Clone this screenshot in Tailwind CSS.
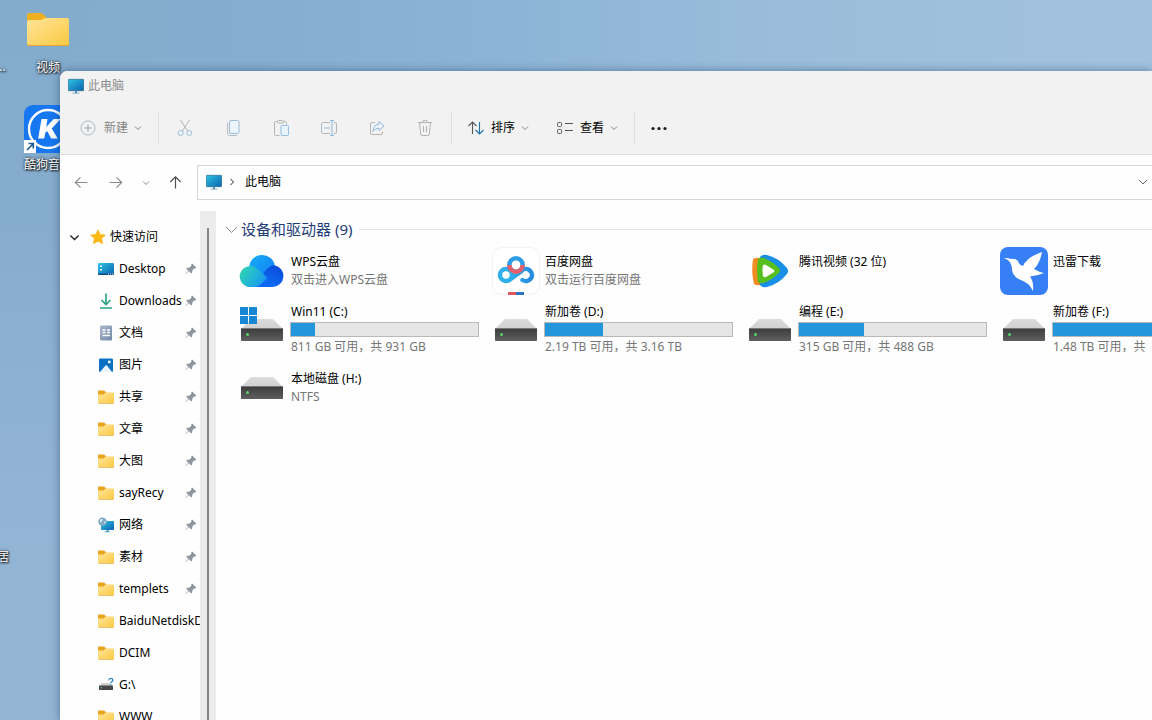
<!DOCTYPE html>
<html lang="zh-CN">
<head>
<meta charset="utf-8">
<meta name="viewport" content="width=device-width, initial-scale=1">
<title>此电脑</title>
<script src="https://cdn.jsdelivr.net/npm/@tailwindcss/browser@4"></script>
</head>
<body class="relative h-screen overflow-hidden bg-[#8fb3d3] bg-[linear-gradient(90deg,#82abcb00_6%,#84adcf_22%,#8db4d6_45%,#98bcda_65%,#9fc0dc_85%,#a2c1de_100%),linear-gradient(180deg,#82abcc_0%,#86accd_30%,#93b5d5_75%,#93b5d3_100%)] font-['Noto_Sans','Noto_Sans_CJK_SC',sans-serif] text-xs text-black">

<!-- Shared icons -->
<svg class="absolute h-0 w-0" aria-hidden="true">
  <defs>
    <linearGradient id="gFolder" x1="0" y1="0" x2="1" y2="1"><stop offset="0" stop-color="#ffe59a"/><stop offset="1" stop-color="#fbc842"/></linearGradient>
    <linearGradient id="gScreen" x1="0" y1="0" x2="1" y2="1"><stop offset="0" stop-color="#2fc3e4"/><stop offset="1" stop-color="#0b62b0"/></linearGradient>
    <linearGradient id="gDriveTop" x1="0" y1="0" x2="0" y2="1"><stop offset="0" stop-color="#dcdcdc"/><stop offset="1" stop-color="#d0d0d0"/></linearGradient>
    <linearGradient id="gDrive" x1="0" y1="0" x2="0" y2="1"><stop offset="0" stop-color="#3c3c3c"/><stop offset="1" stop-color="#5e5e5e"/></linearGradient>
    <linearGradient id="gCloudL" x1="0" y1="0.3" x2="1" y2="0.8"><stop offset="0" stop-color="#2fd3b4"/><stop offset="1" stop-color="#1594f5"/></linearGradient>
    <linearGradient id="gCloudT" x1="0" y1="0" x2="1" y2="1"><stop offset="0" stop-color="#16aef6"/><stop offset="1" stop-color="#1277f5"/></linearGradient>
    <linearGradient id="gCloudR" x1="0.8" y1="0" x2="0.3" y2="1"><stop offset="0" stop-color="#0a48d8"/><stop offset="1" stop-color="#1070f4"/></linearGradient>
    <linearGradient id="gBaidu" x1="0" y1="0" x2="1" y2="0"><stop offset="0" stop-color="#2fb0ea"/><stop offset="1" stop-color="#2a8be0"/></linearGradient>
    <linearGradient id="gDoc" x1="0" y1="0" x2="1" y2="1"><stop offset="0" stop-color="#a9b8cc"/><stop offset="1" stop-color="#7488a6"/></linearGradient>
  </defs>
  <symbol id="folder" viewBox="0 0 44 36">
    <path d="M1 3a2 2 0 0 1 2-2h11q2 0 3 1l4 4v8H1z" fill="#eeaf20"/>
    <path d="M1 10a2 2 0 0 1 2-2h11q2 0 3-1l2-1h22a2 2 0 0 1 2 2v24a2 2 0 0 1-2 2H3a2 2 0 0 1-2-2z" fill="url(#gFolder)"/>
    <path d="M1 31v1a2 2 0 0 0 2 2h38a2 2 0 0 0 2-2v-1a2 2 0 0 1-2 2H3a2 2 0 0 1-2-2z" fill="#e4a52d"/>
  </symbol>
  <symbol id="folder16" viewBox="0 0 16 14">
    <path d="M0 1.500a1 1 0 0 1 1-1h5l2.500 2V6H0z" fill="#e3a51c"/>
    <path d="M0 4.500h5.500L7.500 2.500H15a1 1 0 0 1 1 1V12.500a1 1 0 0 1-1 1H1a1 1 0 0 1-1-1z" fill="url(#gFolder)"/>
    <path d="M0 12.300v.2a1 1 0 0 0 1 1h14a1 1 0 0 0 1-1v-.2a1 1 0 0 1-1 .6H1a1 1 0 0 1-1-.6z" fill="#dca031"/>
  </symbol>
  <symbol id="monitor" viewBox="0 0 16 16">
    <rect x="0.3" y="1.3" width="15.4" height="11.4" rx="0.8" fill="url(#gScreen)" stroke="#1b5c80" stroke-width="0.6"/>
    <path d="M7 13h2v2H7zM4.500 14.700h7v.8h-7z" fill="#5b93b8"/>
  </symbol>
  <symbol id="chev" viewBox="0 0 8 8"><path d="M1 2.500 4 5.500 7 2.500" fill="none" stroke="currentColor"/></symbol>
  <symbol id="pin" viewBox="0 0 12 12"><path d="M7.200.5 11.500 4.800 10.200 5.600 9.300 5.500 7.300 7.500 7.200 9.800 6.200 10.400 3.900 8.100.7 11.300.5 10.900 3.200 7.400 1.300 5.500 1.900 4.700 4.300 4.700 6.300 2.700 6.200 1.600z" fill="#8e959e"/></symbol>
  <symbol id="drive" viewBox="0 0 48 48">
    <path d="M13 14h22l10 10H3z" fill="url(#gDriveTop)"/>
    <rect x="3" y="23" width="42" height="13" rx="0.8" fill="url(#gDrive)"/>
    <path d="M3 23.500h42" stroke="#777"/>
    <circle cx="9.500" cy="29.500" r="1.500" fill="#54d468"/>
  </symbol>
</svg>

<!-- Desktop shortcuts -->
<div class="absolute left-[18px] top-3 flex w-[60px] flex-col items-center text-white [text-shadow:1px_1px_2px_#000,0_0_3px_#000]">
  <svg class="h-9 w-11"><use href="#folder"/></svg>
  <span class="mt-3 leading-4">视频</span>
</div>
<div class="absolute left-[14px] top-[105px] flex w-[70px] flex-col text-white [text-shadow:1px_1px_2px_#000,0_0_3px_#000]">
  <svg class="ml-[10px] h-12 w-12" viewBox="0 0 48 48">
    <rect width="48" height="48" rx="9" fill="#1677f0"/>
    <circle cx="24" cy="24" r="19" fill="none" stroke="#fff" stroke-width="2.400"/>
    <path d="M17.500 14h6l-1.300 8 7.500-8h7l-9 9.500 6 10h-6.500l-4-7.500-2 2-1 5.500h-6z" fill="#fff"/>
    <rect y="35" width="12" height="13" fill="#fff"/>
    <path d="M3 45 9 39M4.500 38.500H9.300V43.500" fill="none" stroke="#1d5c91" stroke-width="1.600"/>
  </svg>
  <span class="ml-[10px] mt-1 whitespace-nowrap leading-4">酷狗音乐</span>
</div>
<span class="absolute -left-1 top-[59px] leading-4 text-white [text-shadow:1px_1px_2px_#000,0_0_3px_#000]">...</span>
<span class="absolute -left-[3px] top-[549px] leading-4 text-white [text-shadow:1px_1px_2px_#000,0_0_3px_#000]">居</span>

<!-- Explorer window -->
<main class="absolute bottom-0 left-[60px] right-0 top-[71px] flex flex-col overflow-hidden rounded-tl-lg bg-[#fefefe] shadow-[0_0_8px_rgba(20,50,90,0.5)]">
  <header class="border-b border-[#dcdcdc] bg-[#f2f2f2]">
    <div class="flex h-[30px] items-center gap-1 pl-2 text-[#8c8c8c]">
      <svg class="h-4 w-4"><use href="#monitor"/></svg>
      <h1>此电脑</h1>
    </div>
    <div class="flex h-[53px] items-center pt-px">
      <button class="ml-5 flex items-center text-[#858585]">
        <svg class="h-4 w-4" viewBox="0 0 16 16" fill="none" stroke="#b0b3b7"><circle cx="8" cy="8" r="7"/><path d="M8 4.500v7M4.500 8h7" stroke="#93a7ba"/></svg>
        <span class="ml-2">新建</span>
        <svg class="ml-[6px] h-2 w-2"><use href="#chev"/></svg>
      </button>
      <span class="ml-4 h-8 w-px bg-[#e0e0e0]"></span>
      <div class="ml-[2px] flex">
        <button class="flex h-8 w-12 items-center justify-center" aria-label="剪切"><svg class="h-4 w-4" viewBox="0 0 16 16" fill="none"><path d="M3.500 0 10.500 11M12.500 0 5.500 11" stroke="#b4b4b4"/><circle cx="3.700" cy="13" r="2.500" stroke="#9cc0e0"/><circle cx="12.300" cy="13" r="2.500" stroke="#9cc0e0"/></svg></button>
        <button class="flex h-8 w-12 items-center justify-center" aria-label="复制"><svg class="h-4 w-4" viewBox="0 0 16 16" fill="none"><rect x="4.500" y=".5" width="9.500" height="13" rx="1.500" fill="#edf5fc" stroke="#9dbad5"/><path d="M2.500 2.500V13a2.500 2.500 0 0 0 2.500 2.500h7" stroke="#b4bcc4"/></svg></button>
        <button class="flex h-8 w-12 items-center justify-center" aria-label="粘贴"><svg class="h-4 w-4" viewBox="0 0 16 16" fill="none"><path d="M6.500 15.500H2.500a1 1 0 0 1-1-1V2.500a1 1 0 0 1 1-1H5M10 1.500h2.500a1 1 0 0 1 1 1v2" stroke="#b4b4b4"/><rect x="4.500" y=".5" width="6" height="2.500" rx="1" stroke="#b4b4b4"/><rect x="8" y="5.500" width="7.500" height="10" rx="1" fill="#eaf4fc" stroke="#97bde0"/></svg></button>
        <button class="flex h-8 w-12 items-center justify-center" aria-label="重命名"><svg class="h-4 w-4" viewBox="0 0 16 16" fill="none"><path d="M9 2.500H2A1.500 1.500 0 0 0 .5 4v8A1.500 1.500 0 0 0 2 13.500h7M13 2.500h1A1.500 1.500 0 0 1 15.500 4v8a1.500 1.500 0 0 1-1.500 1.500h-1" stroke="#afb8c0"/><path d="M11 .5v15M9 .5h4M9 15.500h4M3 8h6" stroke="#8db7df"/></svg></button>
        <button class="flex h-8 w-12 items-center justify-center" aria-label="共享"><svg class="h-4 w-4" viewBox="0 0 16 16" fill="none"><path d="M6 2.500H3A1.500 1.500 0 0 0 1.500 4v9A1.500 1.500 0 0 0 3 14.500h9a1.500 1.500 0 0 0 1.500-1.500v-1.500" stroke="#b4b4b4"/><path d="M10 1.500 15 6l-5 4.500V8Q6 8 4 11.500 4.500 4.500 10 4.200z" fill="#edf5fc" stroke="#97b7d5"/></svg></button>
        <button class="flex h-8 w-12 items-center justify-center" aria-label="删除"><svg class="h-4 w-4" viewBox="0 0 16 16" fill="none" stroke="#b2b2b2"><path d="M1 2.500h14M5.500 2.500a2.500 2.300 0 0 1 5 0M2.500 2.500 3.700 14a1.500 1.500 0 0 0 1.400 1.500h5.800a1.500 1.500 0 0 0 1.400-1.500l1.200-11.500M6.500 6v6M9.500 6v6"/></svg></button>
      </div>
      <span class="ml-[2px] h-8 w-px bg-[#e0e0e0]"></span>
      <button class="ml-4 flex items-center">
        <svg class="h-4 w-4" viewBox="0 0 16 16" fill="none" stroke-width="1.100"><path d="M4.500 14V2M.5 6l4-4 4 4" stroke="#555"/><path d="M11.500 2v12M7.500 10l4 4 4-4" stroke="#2175ae"/></svg>
        <span class="ml-[7px]">排序</span>
        <svg class="ml-[6px] h-2 w-2 text-[#888]"><use href="#chev"/></svg>
      </button>
      <button class="ml-7 flex items-center">
        <svg class="h-4 w-4" viewBox="0 0 16 16" fill="none" stroke="#555"><rect x=".5" y="2.500" width="4" height="4" rx="1"/><rect x=".5" y="9.500" width="4" height="4" rx="1"/><path d="M8 3.500h8M8 10.500h8"/></svg>
        <span class="ml-[7px]">查看</span>
        <svg class="ml-[6px] h-2 w-2 text-[#888]"><use href="#chev"/></svg>
      </button>
      <span class="ml-4 h-8 w-px bg-[#e0e0e0]"></span>
      <button class="ml-4" aria-label="更多"><svg class="h-4 w-4" viewBox="0 0 16 16" fill="#1a1a1a"><circle cx="2" cy="8.500" r="1.600"/><circle cx="8" cy="8.500" r="1.600"/><circle cx="14" cy="8.500" r="1.600"/></svg></button>
    </div>
  </header>

  <nav class="flex items-center pt-[10px]" aria-label="导航">
    <button class="ml-[14px] text-[#8d8d8d]" aria-label="后退"><svg class="h-[14px] w-[14px]" viewBox="0 0 14 14" fill="none" stroke="currentColor" stroke-width="1.200"><path d="M13.500 6.500H1.500M6.500 1.300 1.300 6.500l5.200 5.200"/></svg></button>
    <button class="ml-[21px] text-[#8d8d8d]" aria-label="前进"><svg class="h-[14px] w-[14px]" viewBox="0 0 14 14" fill="none" stroke="currentColor" stroke-width="1.200"><path d="M.5 6.500h12M7.500 1.300 12.700 6.500l-5.200 5.200"/></svg></button>
    <button class="ml-[19px] text-[#8d8d8d]" aria-label="最近位置"><svg class="h-2 w-2"><use href="#chev"/></svg></button>
    <button class="ml-[18px] text-[#505050]" aria-label="向上"><svg class="h-[14px] w-[14px]" viewBox="0 0 14 14" fill="none" stroke="currentColor" stroke-width="1.200"><path d="M7.500 12.500V1M2.300 6 7.500.8l5.200 5.200"/></svg></button>
    <div class="ml-[15px] flex h-[35px] flex-1 items-center border border-r-0 border-[#d6d6d6] pb-px pl-2">
      <svg class="h-4 w-4"><use href="#monitor"/></svg>
      <svg class="ml-[6px] h-2 w-2 -rotate-90 text-[#222]"><use href="#chev"/></svg>
      <a href="#" class="ml-[9px]">此电脑</a>
      <button class="ml-auto mr-1 text-[#666]" aria-label="展开"><svg class="h-[10px] w-[10px]" viewBox="0 0 10 10" fill="none" stroke="currentColor"><path d="M1 3l4 4 4-4"/></svg></button>
    </div>
  </nav>

  <div class="flex min-h-0 flex-1 pt-[11px]">
    <aside class="w-[140px] shrink-0 overflow-hidden pt-[10px]">
      <button class="flex h-8 items-center pl-[9px]">
        <svg class="h-[11px] w-[11px] text-[#222]"><use href="#chev"/></svg>
        <svg class="ml-[10px] h-4 w-4" viewBox="0 0 16 16"><path d="m8 .8 2.200 4.700 5.200.6-3.800 3.500 1 5.100L8 12.200l-4.600 2.500 1-5.100L.6 6.100l5.200-.6z" fill="#fdbb12" stroke="#f3a60d" stroke-width=".6"/></svg>
        <span class="ml-1">快速访问</span>
      </button>
      <ul class="[&_a]:flex [&_a]:h-8 [&_a]:items-center [&_a]:pl-[38px] [&_a]:whitespace-nowrap [&_span]:ml-[5px] [&_span]:w-[66px] [&_svg]:shrink-0">
        <li><a href="#"><svg class="h-4 w-4" viewBox="0 0 16 16"><rect y="2" width="16" height="12" rx="1.200" fill="url(#gScreen)"/><path d="M2 4.500h2v1.500H2zM2 8h2v1.500H2z" fill="#e7fbff"/><path d="M0 12.500h16v.5a1 1 0 0 1-1 1H1a1 1 0 0 1-1-1z" fill="#0d4c8c"/><path d="M10 13h1M12 13h1M14 13h1" stroke="#d9efff"/></svg><span>Desktop</span><svg class="h-3 w-3"><use href="#pin"/></svg></a></li>
        <li><a href="#"><svg class="h-4 w-4" viewBox="0 0 16 16" fill="none" stroke="#27a384" stroke-width="1.600"><path d="M8 .5V11M3.500 7 8 11.500 12.500 7M2 15h12"/></svg><span>Downloads</span><svg class="h-3 w-3"><use href="#pin"/></svg></a></li>
        <li><a href="#"><svg class="h-4 w-4" viewBox="0 0 16 16"><rect x="2" y=".5" width="12" height="15" rx="1.200" fill="url(#gDoc)"/><path d="M4.500 5h3M4.500 7.500h3M9 5h3M9 7.500h3M4.500 10.500h7.500" stroke="#fff" stroke-width="1.300"/></svg><span>文档</span><svg class="h-3 w-3"><use href="#pin"/></svg></a></li>
        <li><a href="#"><svg class="h-4 w-4" viewBox="0 0 16 16"><rect x="1" y="1.500" width="14" height="13.500" rx="1.200" fill="#0c70c4"/><path d="m2 15 5.500-6.500a1 1 0 0 1 1.400 0L14 15z" fill="#e9f5ff"/><circle cx="11.300" cy="5" r="1.400" fill="#fff"/></svg><span>图片</span><svg class="h-3 w-3"><use href="#pin"/></svg></a></li>
        <li><a href="#"><svg class="h-[14px] w-4"><use href="#folder16"/></svg><span>共享</span><svg class="h-3 w-3"><use href="#pin"/></svg></a></li>
        <li><a href="#"><svg class="h-[14px] w-4"><use href="#folder16"/></svg><span>文章</span><svg class="h-3 w-3"><use href="#pin"/></svg></a></li>
        <li><a href="#"><svg class="h-[14px] w-4"><use href="#folder16"/></svg><span>大图</span><svg class="h-3 w-3"><use href="#pin"/></svg></a></li>
        <li><a href="#"><svg class="h-[14px] w-4"><use href="#folder16"/></svg><span>sayRecy</span><svg class="h-3 w-3"><use href="#pin"/></svg></a></li>
        <li><a href="#"><svg class="h-4 w-4" viewBox="0 0 16 16"><rect x="3" y="4" width="13" height="9" rx=".8" fill="url(#gScreen)"/><path d="M8.500 13h2v1.500h2v.8h-6v-.8h2z" fill="#4d93c2"/><circle cx="4.500" cy="4.800" r="4.200" fill="#7fa9c4"/><path d="M2 2.500q2-1 3 0l-1 2-2 1zM6 5l2-1-1 3z" fill="#d6eaf4"/></svg><span>网络</span><svg class="h-3 w-3"><use href="#pin"/></svg></a></li>
        <li><a href="#"><svg class="h-[14px] w-4"><use href="#folder16"/></svg><span>素材</span><svg class="h-3 w-3"><use href="#pin"/></svg></a></li>
        <li><a href="#"><svg class="h-[14px] w-4"><use href="#folder16"/></svg><span>templets</span><svg class="h-3 w-3"><use href="#pin"/></svg></a></li>
        <li><a href="#"><svg class="h-[14px] w-4"><use href="#folder16"/></svg><span>BaiduNetdiskDownload</span></a></li>
        <li><a href="#"><svg class="h-[14px] w-4"><use href="#folder16"/></svg><span>DCIM</span></a></li>
        <li><a href="#"><svg class="h-4 w-4" viewBox="0 0 16 16"><path d="M4 6h7l3.500 3h-13z" fill="#cfcfcf"/><rect x="1" y="8.500" width="14" height="4.500" rx=".5" fill="#484848"/><circle cx="3.200" cy="10.700" r=".8" fill="#54d468"/><path d="M10.800 3.200q.1-1.900 2-1.900t2 1.700q0 1-1 1.700t-1 1.600M12.800 7.300v1.300" fill="none" stroke="#2387b8" stroke-width="1.300"/></svg><span>G:\</span></a></li>
        <li><a href="#"><svg class="h-[14px] w-4"><use href="#folder16"/></svg><span>WWW</span></a></li>
      </ul>
    </aside>
    <div class="flex w-4 shrink-0 justify-center bg-[#ececec] pt-[17px]"><div class="w-[2px] bg-[#858585]"></div></div>

    <section class="min-w-0 flex-1 overflow-hidden">
      <div class="flex h-[31px] items-center pl-[9px] pt-[6px]">
        <svg class="h-[13px] w-[13px] text-[#888]" viewBox="0 0 13 13"><path d="M1 4l5.500 5.500L12 4" fill="none" stroke="currentColor"/></svg>
        <h2 class="ml-[3px] pb-[2px] text-[15px] leading-5 text-[#1f3b78]">设备和驱动器 (9)</h2>
        <div class="ml-[7px] h-px flex-1 bg-[#e3e3e3]"></div>
      </div>
      <ul class="grid auto-rows-[58px] grid-cols-[repeat(4,254px)] pl-[22px] leading-[18px] [&>li]:flex [&>li]:items-center [&>li]:gap-1 [&>li]:pr-[13px] [&>li>div]:flex-1 [&>li>svg]:shrink-0 [&_p]:pl-px">
        <li>
          <svg class="h-12 w-12" viewBox="0 0 48 48"><path d="M11 22a13 13 0 0 1 26-2l-4 20H14z" fill="url(#gCloudT)"/><path d="M29 40h6a11 11 0 0 0 1.500-21.800Q32 18 27 24l-5 8z" fill="url(#gCloudR)"/><path d="M18 40 31 28 33 40z" fill="#0f66f2"/><path d="M13 40a10.500 10.500 0 1 1 6-18.500l9 8q1.500 1.500 0 3L22 38q-2.500 2-6 2z" fill="url(#gCloudL)"/></svg>
          <div><p>WPS云盘</p><p class="text-[#767676]">双击进入WPS云盘</p></div>
        </li>
        <li>
          <svg class="h-12 w-12" viewBox="0 0 48 48"><rect x=".5" y=".5" width="47" height="47" rx="9" fill="#fff" stroke="#f3f3f3"/><g fill="none" stroke-width="4.500"><circle cx="14" cy="28" r="6" stroke="#2fb0ea"/><path d="M18 32.500 29.500 24a6 6 0 1 1 1 9" stroke="url(#gBaidu)" stroke-linecap="round"/><circle cx="24" cy="18" r="6.700" stroke="#2f9de6"/><path d="M17.300 18a6.700 6.700 0 0 0 13.400 0" stroke="#e4606c"/></g><path d="M16 45h8v3h-8z" fill="#e45562"/><path d="M24 45h8v3h-8z" fill="#2976c8"/></svg>
          <div><p>百度网盘</p><p class="text-[#767676]">双击运行百度网盘</p></div>
        </li>
        <li>
          <svg class="h-12 w-12" viewBox="0 0 48 48"><path d="M7 12q4-2 8-1v27q-4 1-7-1-3-12-1-25z" fill="#ef8c22"/><path d="M14 10q2-3 7-2 12 3 20 13 2 3 0 6-8 10-20 13-5 1-7-2-4-14 0-28z" fill="#1a8fe8"/><path d="M12 12q2-2 6-1 9 4 15 10 2 2.500 0 5-6 6-15 10-4 1-6-1-2-11 0-23z" fill="#56bf1b"/><path d="M17 18q1-1 3 0l8 5q1 1 0 2l-8 5q-2 1-3-1-1-6 0-11z" fill="#fff"/></svg>
          <div><p>腾讯视频 (32 位)</p><p aria-hidden="true">&nbsp;</p></div>
        </li>
        <li>
          <svg class="h-12 w-12" viewBox="0 0 48 48"><rect width="48" height="48" rx="8" fill="#367ff5"/><path d="M4 11q4-.5 7 1 4-1 7 2 1 4 5 5Q27 10 42 5q-2 11-8 17 5 3 10 4-7 3-14 3.500l1 1.500q3 5 2 13-4-8-10-10-11-4-11-12 0-8-8-11z" fill="#fff"/></svg>
          <div><p>迅雷下载</p><p aria-hidden="true">&nbsp;</p></div>
        </li>
        <li>
          <svg class="h-12 w-12" viewBox="0 0 48 48"><use href="#drive"/><path d="M2 2h8v8H2zM11 2h8v8h-8zM2 11h8v8H2zM11 11h8v8h-8z" fill="#1787d4"/></svg>
          <div class="pt-px"><p>Win11 (C:)</p><div class="mb-px mt-px h-[15px] border border-[#b9b9b9] bg-[#e6e6e6]" role="progressbar" aria-label="C 盘已用空间" aria-valuenow="13"><div class="h-full bg-[#2497dc]" style="width:13%"></div></div><p class="text-[#767676]">811 GB 可用，共 931 GB</p></div>
        </li>
        <li>
          <svg class="h-12 w-12"><use href="#drive"/></svg>
          <div class="pt-px"><p>新加卷 (D:)</p><div class="mb-px mt-px h-[15px] border border-[#b9b9b9] bg-[#e6e6e6]" role="progressbar" aria-label="D 盘已用空间" aria-valuenow="31"><div class="h-full bg-[#2497dc]" style="width:31%"></div></div><p class="text-[#767676]">2.19 TB 可用，共 3.16 TB</p></div>
        </li>
        <li>
          <svg class="h-12 w-12"><use href="#drive"/></svg>
          <div class="pt-px"><p>编程 (E:)</p><div class="mb-px mt-px h-[15px] border border-[#b9b9b9] bg-[#e6e6e6]" role="progressbar" aria-label="E 盘已用空间" aria-valuenow="35"><div class="h-full bg-[#2497dc]" style="width:35%"></div></div><p class="text-[#767676]">315 GB 可用，共 488 GB</p></div>
        </li>
        <li>
          <svg class="h-12 w-12"><use href="#drive"/></svg>
          <div class="pt-px"><p>新加卷 (F:)</p><div class="mb-px mt-px h-[15px] border border-[#b9b9b9] bg-[#e6e6e6]" role="progressbar" aria-label="F 盘已用空间" aria-valuenow="60"><div class="h-full bg-[#2497dc]" style="width:60%"></div></div><p class="text-[#767676]">1.48 TB 可用，共</p></div>
        </li>
        <li>
          <svg class="h-12 w-12"><use href="#drive"/></svg>
          <div class="pt-[2px]"><p>本地磁盘 (H:)</p><p class="text-[#767676]">NTFS</p></div>
        </li>
      </ul>
    </section>
  </div>
</main>
</body>
</html>
